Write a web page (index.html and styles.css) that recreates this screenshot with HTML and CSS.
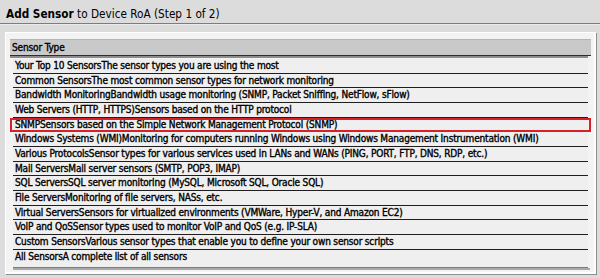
FILE: index.html
```html
<!DOCTYPE html>
<html>
<head>
<meta charset="utf-8">
<link rel="stylesheet" href="styles.css">
</head>
<body>
<div class="title"><b>Add Sensor</b> to Device RoA (Step 1 of 2)</div>
<div class="panel">
  <div class="thead">Sensor Type</div>
  <div class="rows">
    <div class="row">Your Top 10 SensorsThe sensor types you are using the most</div>
    <div class="row">Common SensorsThe most common sensor types for network monitoring</div>
    <div class="row">Bandwidth MonitoringBandwidth usage monitoring (SNMP, Packet Sniffing, NetFlow, sFlow)</div>
    <div class="row">Web Servers (HTTP, HTTPS)Sensors based on the HTTP protocol</div>
    <div class="row selected">SNMPSensors based on the Simple Network Management Protocol (SNMP)</div>
    <div class="row">Windows Systems (WMI)Monitoring for computers running Windows using Windows Management Instrumentation (WMI)</div>
    <div class="row">Various ProtocolsSensor types for various services used in LANs and WANs (PING, PORT, FTP, DNS, RDP, etc.)</div>
    <div class="row">Mail ServersMail server sensors (SMTP, POP3, IMAP)</div>
    <div class="row">SQL ServersSQL server monitoring (MySQL, Microsoft SQL, Oracle SQL)</div>
    <div class="row">File ServersMonitoring of file servers, NASs, etc.</div>
    <div class="row">Virtual ServersSensors for virtualized environments (VMWare, Hyper-V, and Amazon EC2)</div>
    <div class="row">VoIP and QoSSensor types used to monitor VoIP and QoS (e.g. IP-SLA)</div>
    <div class="row">Custom SensorsVarious sensor types that enable you to define your own sensor scripts</div>
    <div class="row last">All SensorsA complete list of all sensors</div>
  </div>
</div>
</body>
</html>
```
FILE: styles.css
```css
html, body {
  margin: 0;
  padding: 0;
  background: #dcdcdc;
  height: 100%;
  overflow: hidden;
}
body {
  font-family: "DejaVu Sans Condensed", "DejaVu Sans", sans-serif;
  color: #000;
}
.title {
  height: 24px;
  box-sizing: border-box;
  padding: 7px 0 0 6px;
  font-size: 11.7px;
  line-height: 14px;
  border-bottom: 1px solid #7c7c7c;
  box-shadow: 0 1px 0 #ececec;
  white-space: nowrap;
}
.title b { font-weight: bold; }
.panel {
  margin: 8px 4px 0 5px;
  height: 242px;
  box-sizing: border-box;
  background: #f3f3f3;
  border-top: 1px solid #fff;
  border-left: 1px solid #fff;
  border-right: 2px solid #fff;
  border-bottom: 2px solid #fff;
  box-shadow: 1px 1px 0 #8e8e8e;
  padding: 6px 3px 0 4px;
}
.thead {
  position: relative;
  height: 17px;
  box-sizing: border-box;
  background: #c9c9c9;
  border-top: 1px solid #b4b4b4;
  border-bottom: 1px solid #2e2e2e;
  font-size: 10px;
  letter-spacing: -0.15px;
  line-height: 15px;
  padding-left: 2px;
  margin-bottom: 3px;
  -webkit-text-stroke: 0.35px #000;
}
.thead::after {
  content: "";
  position: absolute;
  left: 0;
  right: 3px;
  bottom: -3px;
  height: 2px;
  background: #8d8d8d;
}
.rows {
  margin: 0 3px;
}
.row {
  position: relative;
  height: 14.67px;
  box-sizing: border-box;
  border-bottom: 1px solid #1e1e1e;
  background: #efefef;
  font-size: 10px;
  letter-spacing: -0.17px;
  line-height: 13.67px;
  padding-left: 2px;
  white-space: nowrap;
  -webkit-text-stroke: 0.35px #000;
}
.row.selected::after {
  content: "";
  position: absolute;
  left: -3px;
  right: -3px;
  top: 0;
  bottom: -1px;
  border: 2.5px solid #d8202b;
}
.row.last {
  height: 18px;
  border-bottom: 1px solid #7d7d7d;
}
.row.last::after {
  content: "";
  position: absolute;
  left: 0;
  right: -2px;
  bottom: -3px;
  height: 2px;
  background: #a9a9a9;
}
```
